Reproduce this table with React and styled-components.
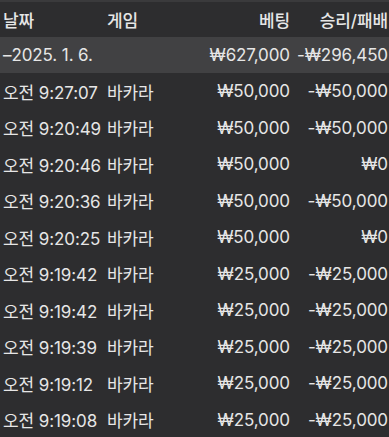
import React from "react";
import styled, { createGlobalStyle } from "styled-components";

const Global = createGlobalStyle`
  html, body { margin: 0; padding: 0; background: #2d2d2f; }
  body { font-family: "Inter", "Noto Sans CJK KR", sans-serif; }
`;

const Table = styled.div`
  width: 389px;
  height: 437px;
  overflow: hidden;
  background: #2d2d2f;
  color: #e6e6e6;
  border-top: 2px solid #3a3a3c;
  box-sizing: border-box;
`;

const Row = styled.div`
  display: grid;
  grid-template-columns: 104px 1fr 100px 98px;
  align-items: center;
  height: ${(p) => p.$h}px;
  padding: 0 1px 0 3px;
  background: ${(p) => (p.$band ? "#414143" : "transparent")};
  font-size: 17px;
  font-weight: ${(p) => (p.$head ? 500 : 400)};
  letter-spacing: -0.1px;
  white-space: nowrap;
`;

const Cell = styled.div`
  grid-column: ${(p) => p.$span || "auto"};
  text-align: ${(p) => (p.$right ? "right" : "left")};
`;

const rows = [
  ["오전 9:27:07", "₩50,000", "-₩50,000"],
  ["오전 9:20:49", "₩50,000", "-₩50,000"],
  ["오전 9:20:46", "₩50,000", "₩0"],
  ["오전 9:20:36", "₩50,000", "-₩50,000"],
  ["오전 9:20:25", "₩50,000", "₩0"],
  ["오전 9:19:42", "₩25,000", "-₩25,000"],
  ["오전 9:19:42", "₩25,000", "-₩25,000"],
  ["오전 9:19:39", "₩25,000", "-₩25,000"],
  ["오전 9:19:12", "₩25,000", "-₩25,000"],
  ["오전 9:19:08", "₩25,000", "-₩25,000"],
];

export default function App() {
  return (
    <>
      <Global />
      <Table>
        <Row $h={35} $head>
          <Cell>날짜</Cell>
          <Cell>게임</Cell>
          <Cell $right>베팅</Cell>
          <Cell $right>승리/패배</Cell>
        </Row>
        <Row $h={36} $band>
          <Cell $span="1 / 3">–2025. 1. 6.</Cell>
          <Cell $right>₩627,000</Cell>
          <Cell $right>-₩296,450</Cell>
        </Row>
        {rows.map((r, i) => (
          <Row key={i} $h={36.5}>
            <Cell>{r[0]}</Cell>
            <Cell>바카라</Cell>
            <Cell $right>{r[1]}</Cell>
            <Cell $right>{r[2]}</Cell>
          </Row>
        ))}
      </Table>
    </>
  );
}
